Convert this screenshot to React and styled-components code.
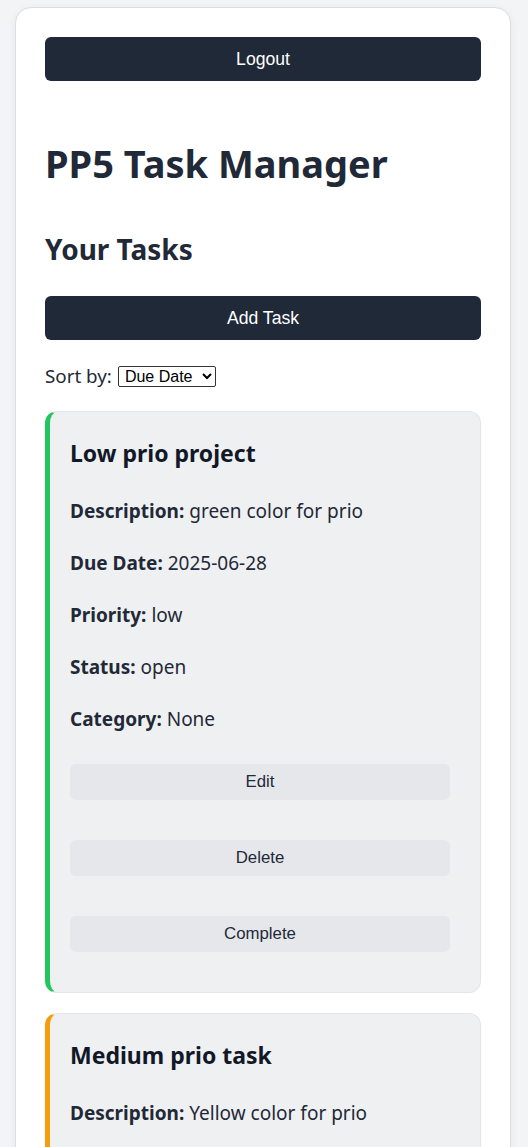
import React, { useState } from 'react';
import styled, { createGlobalStyle } from 'styled-components';

const GlobalStyle = createGlobalStyle`
  body {
    margin: 0;
    background: #f3f4f6;
    font-family: "Noto Sans", "Open Sans", sans-serif;
    color: #1f2937;
  }
`;

const Container = styled.div`
  margin: 7px 17px 20px 15px;
  padding: 29px;
  background: #fff;
  border: 1px solid #dcdde1;
  border-radius: 16px;
  box-shadow: 0 2px 8px rgba(0, 0, 0, 0.06);
`;

const DarkButton = styled.button`
  display: block;
  width: 100%;
  height: 44px;
  border: none;
  border-radius: 6px;
  background: #1f2937;
  color: #fff;
  font-family: "Liberation Sans", Arial, sans-serif;
  font-size: 17.6px;
  cursor: pointer;
`;

const Title = styled.h1`
  margin: 58px 0 0;
  font-size: 38px;
  line-height: 48px;
  font-weight: 700;
  color: #1f2937;
`;

const SubTitle = styled.h2`
  margin: 44px 0 29px;
  font-size: 28px;
  line-height: 36px;
  font-weight: 700;
  color: #1f2937;
`;

const SortRow = styled.div`
  display: flex;
  align-items: center;
  gap: 6px;
  margin: 24px 0 23px;
  font-size: 18.8px;
  line-height: 24px;
`;

const SortSelect = styled.select`
  width: 98px;
  height: 21px;
  padding: 0 0 0 2px;
  border: 1px solid #333;
  border-radius: 2px;
  background: #fff;
  font-family: "Liberation Sans", Arial, sans-serif;
  font-size: 16px;
  color: #000;
`;

const Card = styled.div`
  margin-bottom: 20px;
  padding: 20px;
  background: #eff0f2;
  border: 1px solid #e3e5e8;
  border-left: 5px solid ${(p) => p.$accent};
  border-radius: 12px;
`;

const CardTitle = styled.h3`
  margin: 7px 0 30px;
  font-size: 23px;
  line-height: 28px;
  font-weight: 700;
  color: #111827;
`;

const Field = styled.p`
  margin: 0 0 24px;
  font-size: 19px;
  line-height: 28px;

  strong {
    font-weight: 700;
  }
`;

const Actions = styled.div`
  display: flex;
  flex-direction: column;
  gap: 40px;
  margin: 31px 10px 20px 0;
`;

const LightButton = styled.button`
  height: 36px;
  border: none;
  border-radius: 6px;
  background: #e5e7eb;
  color: #1f2937;
  font-family: "Liberation Sans", Arial, sans-serif;
  font-size: 16.8px;
  cursor: pointer;
`;

const tasks = [
  {
    id: 1,
    title: 'Low prio project',
    description: 'green color for prio',
    due: '2025-06-28',
    priority: 'low',
    status: 'open',
    category: 'None',
  },
  {
    id: 2,
    title: 'Medium prio task',
    description: 'Yellow color for prio',
    due: '2025-07-02',
    priority: 'medium',
    status: 'open',
    category: 'None',
  },
];

const accents = { low: '#22c55e', medium: '#f59e0b', high: '#ef4444' };

const TaskCard = ({ task }) => (
  <Card $accent={accents[task.priority]}>
    <CardTitle>{task.title}</CardTitle>
    <Field>
      <strong>Description:</strong> {task.description}
    </Field>
    <Field>
      <strong>Due Date:</strong> {task.due}
    </Field>
    <Field>
      <strong>Priority:</strong> {task.priority}
    </Field>
    <Field>
      <strong>Status:</strong> {task.status}
    </Field>
    <Field>
      <strong>Category:</strong> {task.category}
    </Field>
    <Actions>
      <LightButton>Edit</LightButton>
      <LightButton>Delete</LightButton>
      <LightButton>Complete</LightButton>
    </Actions>
  </Card>
);

const App = () => {
  const [sort, setSort] = useState('due');

  return (
    <>
      <GlobalStyle />
      <Container>
        <DarkButton>Logout</DarkButton>
        <Title>PP5 Task Manager</Title>
        <SubTitle>Your Tasks</SubTitle>
        <DarkButton>Add Task</DarkButton>
        <SortRow>
          Sort by:
          <SortSelect value={sort} onChange={(e) => setSort(e.target.value)}>
            <option value="due">Due Date</option>
            <option value="priority">Priority</option>
          </SortSelect>
        </SortRow>
        {tasks.map((task) => (
          <TaskCard key={task.id} task={task} />
        ))}
      </Container>
    </>
  );
};

export default App;
